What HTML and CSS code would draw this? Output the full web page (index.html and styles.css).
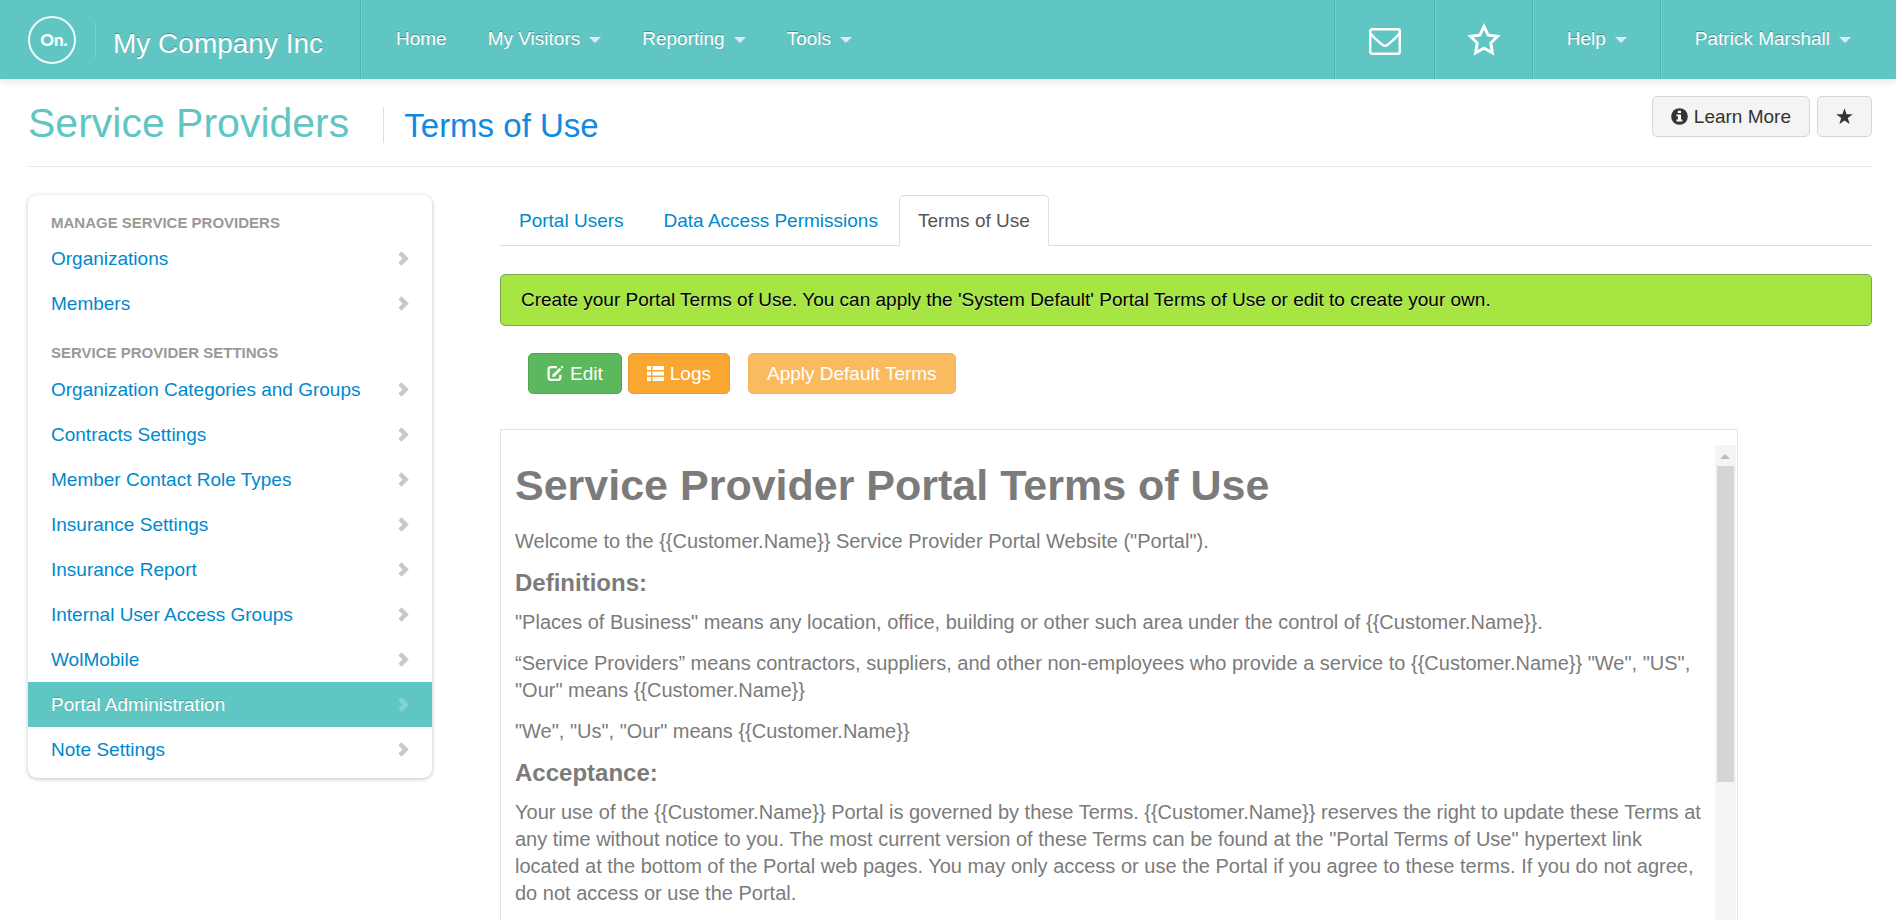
FILE: index.html
```html
<!DOCTYPE html>
<html lang="en">
<head>
<meta charset="utf-8">
<title>Service Providers - Terms of Use</title>
<link rel="stylesheet" href="styles.css">
</head>
<body>
<svg class="sprite" aria-hidden="true">
  <symbol id="chevron" viewBox="0 0 11 15"><path d="M.4 3.400 3.500.3 10.800 7.500 3.500 14.700.4 11.600 4.600 7.500z"/></symbol>
</svg>
<div class="page">
  <header class="navbar">
    <div class="brand">
      <svg class="logo" viewBox="0 0 48 48" role="img" aria-label="On.">
        <circle cx="24" cy="24" r="23" fill="none" stroke="#fff" stroke-opacity=".9" stroke-width="2"/>
        <text x="26" y="30" text-anchor="middle" class="logo-text">On.</text>
      </svg>
      <a class="company" href="#">My Company Inc</a>
    </div>
    <nav class="menu" aria-label="Main">
      <a href="#">Home</a>
      <a href="#">My Visitors<span class="caret"></span></a>
      <a href="#">Reporting<span class="caret"></span></a>
      <a href="#">Tools<span class="caret"></span></a>
    </nav>
    <nav class="account" aria-label="Account">
      <a class="cell mail" href="#" aria-label="Messages">
        <svg width="32" height="27" viewBox="0 0 32 27" fill="none" stroke="#fff" stroke-width="2.4" stroke-linejoin="round"><rect x="1.2" y="1.2" width="29.6" height="24.6" rx="2"/><path d="M1.6 5.5C5 10 9 13 12.500 16.200Q16 19.300 19.500 16.200C23 13 27 10 30.400 5.500"/></svg>
      </a>
      <a class="cell fav" href="#" aria-label="Favorites">
        <svg width="34" height="34" viewBox="0 0 32 32" fill="none" stroke="#fff" stroke-width="2.700"><path d="M16 3.200 19.900 11.400 28.800 12.600 22.400 18.900 23.900 28 16 23.700 8.100 28 9.600 18.900 3.200 12.600 12.100 11.400z"/></svg>
      </a>
      <a class="cell help" href="#">Help<span class="caret"></span></a>
      <a class="cell user" href="#">Patrick Marshall<span class="caret"></span></a>
    </nav>
  </header>

  <div class="container">
    <div class="page-head">
      <h1 class="title">Service Providers</h1>
      <h2 class="subtitle">Terms of Use</h2>
      <div class="head-actions">
        <button class="btn" type="button">
          <svg width="17" height="17" viewBox="0 0 18 18"><circle cx="9" cy="9" r="8.800" fill="#333"/><path fill="#fff" d="M7.200 2.800h3.400v2.600H7.200zM5.800 6.800h4.800v5.400h1.400v2H5.800v-2h1.500V8.700H5.800z"/></svg>
          Learn More
        </button>
        <button class="btn" type="button" aria-label="Add to favorites">
          <svg width="17" height="17" viewBox="0 0 18 18"><path fill="#333" d="M9 .3 11.200 6.500 17.700 6.700 12.500 10.700 14.400 17 9 13.300 3.600 17 5.500 10.700 .3 6.700 6.800 6.500z"/></svg>
        </button>
      </div>
    </div>

    <div class="columns">
      <aside class="sidebar">
        <h3>Manage Service Providers</h3>
        <ul>
          <li><a href="#">Organizations<svg><use href="#chevron"/></svg></a></li>
          <li><a href="#">Members<svg><use href="#chevron"/></svg></a></li>
        </ul>
        <h3>Service Provider Settings</h3>
        <ul>
          <li><a href="#">Organization Categories and Groups<svg><use href="#chevron"/></svg></a></li>
          <li><a href="#">Contracts Settings<svg><use href="#chevron"/></svg></a></li>
          <li><a href="#">Member Contact Role Types<svg><use href="#chevron"/></svg></a></li>
          <li><a href="#">Insurance Settings<svg><use href="#chevron"/></svg></a></li>
          <li><a href="#">Insurance Report<svg><use href="#chevron"/></svg></a></li>
          <li><a href="#">Internal User Access Groups<svg><use href="#chevron"/></svg></a></li>
          <li><a href="#">WolMobile<svg><use href="#chevron"/></svg></a></li>
          <li><a class="active" href="#" aria-current="page">Portal Administration<svg><use href="#chevron"/></svg></a></li>
          <li><a href="#">Note Settings<svg><use href="#chevron"/></svg></a></li>
        </ul>
      </aside>

      <main class="content">
        <nav class="tabs" aria-label="Portal sections">
          <a href="#">Portal Users</a>
          <a href="#">Data Access Permissions</a>
          <a class="current" href="#" aria-current="page">Terms of Use</a>
        </nav>
        <p class="alert">Create your Portal Terms of Use. You can apply the 'System Default' Portal Terms of Use or edit to create your own.</p>
        <div class="toolbar">
          <button class="btn btn-edit" type="button">
            <svg width="17" height="17" viewBox="0 0 18 18" fill="none" stroke="#fff"><path stroke-width="2.400" d="M10.500 2.200H4.200Q1.700 2.200 1.700 4.700v8.600q0 2.500 2.500 2.500h7.400q2.500 0 2.500-2.500v-3"/><path stroke-width="2.800" d="M7.500 10.800 14.200 4"/><path stroke-width="2.600" d="M15.200 3 16.700 1.500"/><path fill="#fff" stroke="none" d="M6.200 8.800 9.400 12 5.600 12.600z"/></svg>
            Edit
          </button>
          <button class="btn btn-logs" type="button">
            <svg width="17" height="17" viewBox="0 0 17 17" fill="#fff"><path d="M0 1h4v4H0zM5.500 1H17v4H5.500zM0 6.500h4v4H0zM5.500 6.500H17v4H5.500zM0 12h4v4H0zM5.500 12H17v4H5.500z"/></svg>
            Logs
          </button>
          <button class="btn btn-apply" type="button">Apply Default Terms</button>
        </div>
        <section class="terms">
          <div class="terms-text">
            <h1>Service Provider Portal Terms of Use</h1>
            <p>Welcome to the {{Customer.Name}} Service Provider Portal Website ("Portal").</p>
            <h3>Definitions:</h3>
            <p>"Places of Business" means any location, office, building or other such area under the control of {{Customer.Name}}.</p>
            <p>“Service Providers” means contractors, suppliers, and other non-employees who provide a service to {{Customer.Name}} "We", "US", "Our" means {{Customer.Name}}</p>
            <p>"We", "Us", "Our" means {{Customer.Name}}</p>
            <h3>Acceptance:</h3>
            <p>Your use of the {{Customer.Name}} Portal is governed by these Terms. {{Customer.Name}} reserves the right to update these Terms at any time without notice to you. The most current version of these Terms can be found at the "Portal Terms of Use" hypertext link located at the bottom of the Portal web pages. You may only access or use the Portal if you agree to these terms. If you do not agree, do not access or use the Portal.</p>
          </div>
          <div class="scrollbar" aria-hidden="true">
            <span class="scroll-up"></span>
            <span class="scroll-thumb"></span>
          </div>
        </section>
      </main>
    </div>
  </div>
</div>
</body>
</html>
```
FILE: styles.css
```css
* { box-sizing: border-box; }

body {
  margin: 0;
  background: #fff;
  color: #333;
  font: 19px/27px "Liberation Sans", Arial, sans-serif;
}

h1, h2, h3, p, ul { margin: 0; padding: 0; }
ul { list-style: none; }
a { color: #0088cc; text-decoration: none; }

.sprite { display: none; }

.page {
  display: flex;
  flex-direction: column;
  height: 100vh;
  overflow: hidden;
}

/* Top bar */
.navbar {
  display: flex;
  flex: none;
  height: 79px;
  background: #60c6c4;
  box-shadow: 0 1px 10px rgba(0, 0, 0, 0.15);
}
.navbar a {
  color: #fff;
  text-shadow: 0 -1px 0 rgba(0, 0, 0, 0.3);
  white-space: nowrap;
}
.brand {
  display: flex;
  align-items: center;
  width: 361px;
  padding-left: 28px;
  border-right: 1px solid #4fb3b3;
  box-shadow: 1px 0 0 #74d3d0;
}
.logo { width: 48px; height: 48px; }
.logo-text { font: 900 17px Lato, sans-serif; fill: #fff; }
.company {
  margin-left: 19px;
  padding: 10px 0 2px 17px;
  border-left: 1px solid #74d3d0;
  font-size: 28px;
  line-height: 24px;
}
.menu {
  display: flex;
  flex: 1;
  align-items: center;
  gap: 41px;
  padding: 0 0 2px 35px;
}
.caret {
  display: inline-block;
  margin-left: 9px;
  border: 6px solid transparent;
  border-top: 6px solid #e1e9f4;
  border-bottom: 0;
  vertical-align: 2px;
}
.account { display: flex; }
.cell {
  display: flex;
  align-items: center;
  padding-bottom: 2px;
  border-left: 1px solid #4fb3b3;
  box-shadow: inset 1px 0 0 #74d3d0;
}
.cell .caret { margin-top: 3px; }
.mail { padding: 3px 33px 0 34px; }
.fav { padding: 0 31px 0 32px; }
.help, .user { padding-left: 34px; }
.help { padding-right: 33px; }
.user { padding-right: 45px; }

/* Page heading */
.container { flex: 1; padding: 0 24px 0 28px; }
.page-head {
  display: flex;
  height: 88px;
  border-bottom: 1px solid #e8e8e8;
}
.title {
  padding-top: 24px;
  color: #60c6c4;
  font-size: 41px;
  font-weight: 400;
  line-height: 40px;
}
.subtitle {
  height: 36px;
  margin: 28px 0 0 34px;
  padding: 1px 0 0 20px;
  border-left: 1px solid #ddd;
  color: #118ae0;
  font-size: 33px;
  font-weight: 400;
  line-height: 36px;
}
.head-actions {
  display: flex;
  gap: 7px;
  margin: 17px 0 0 auto;
}
.btn {
  display: flex;
  align-items: center;
  justify-content: center;
  gap: 6px;
  height: 41px;
  padding: 0 18px;
  border: 1px solid #d6d6d6;
  border-radius: 5px;
  background: #f4f4f4;
  color: #333;
  font: inherit;
}

/* Columns */
.columns {
  display: flex;
  align-items: flex-start;
  gap: 68px;
  padding-top: 28px;
}
.sidebar {
  flex: none;
  width: 404px;
  padding: 15px 0 6px;
  border-radius: 9px;
  box-shadow: 0 1px 4px rgba(0, 0, 0, 0.25);
}
.sidebar h3 {
  padding-left: 23px;
  color: #999;
  font-size: 15px;
  line-height: 26px;
  text-transform: uppercase;
}
.sidebar ul + h3 { padding: 14px 0 1px 23px; }
.sidebar a {
  display: flex;
  align-items: center;
  justify-content: space-between;
  height: 45px;
  padding: 0 23px;
}
.sidebar svg { width: 11px; height: 15px; fill: #c8c8c8; }
.sidebar .active {
  background: #60c6c4;
  color: #fff;
  text-shadow: 0 -1px 0 rgba(0, 0, 0, 0.2);
}
.sidebar .active svg { fill: #80d5d1; }

.content { flex: 1; min-width: 0; }
.tabs {
  display: flex;
  gap: 2px;
  border-bottom: 1px solid #ddd;
}
.tabs a {
  margin-bottom: -1px;
  padding: 11px 18px;
  border: 1px solid transparent;
  border-radius: 5px 5px 0 0;
}
.tabs .current {
  border-color: #ddd #ddd #fff;
  background: #fff;
  color: #555;
}
.alert {
  margin-top: 28px;
  padding: 11px 20px 12px;
  border: 1px solid #7da74c;
  border-radius: 5px;
  background: #a6e542;
  color: #000;
  text-shadow: 0 1px 0 rgba(255, 255, 255, 0.5);
}
.toolbar {
  display: flex;
  gap: 6px;
  padding: 27px 28px 35px;
}
.toolbar .btn { color: #fff; }
.toolbar .btn-edit { border-color: #4fa84f; background: #5cb85c; }
.toolbar .btn-logs { border-color: #ee9a2a; background: #faa732; }
.toolbar .btn-apply {
  margin-left: 12px;
  border-color: #f5b25a;
  background: #fabb60;
}

/* Terms document */
.terms {
  display: flex;
  width: calc(90% + 3px);
  padding: 15px 1px 15px 14px;
  border: 1px solid #e4e4e4;
  color: #7b7b7b;
  font-size: 20px;
}
.terms-text {
  flex: 1;
  min-width: 0;
  height: 540px;
  padding-right: 8px;
  overflow: hidden;
}
.terms h1 {
  padding: 20px 0 22px;
  font-size: 43px;
  line-height: 41px;
}
.terms p { margin-bottom: 14px; }
.terms h3 {
  margin-bottom: 13px;
  font-size: 24px;
  line-height: 27px;
}
.scrollbar {
  display: flex;
  flex-direction: column;
  align-items: center;
  width: 21px;
  background: #f4f4f4;
}
.scroll-up {
  margin: 9px 0 7px;
  border: 5px solid transparent;
  border-top: 0;
  border-bottom: 5px solid #bcbcbc;
}
.scroll-thumb { width: 17px; height: 316px; background: #d5d5d5; }
```
